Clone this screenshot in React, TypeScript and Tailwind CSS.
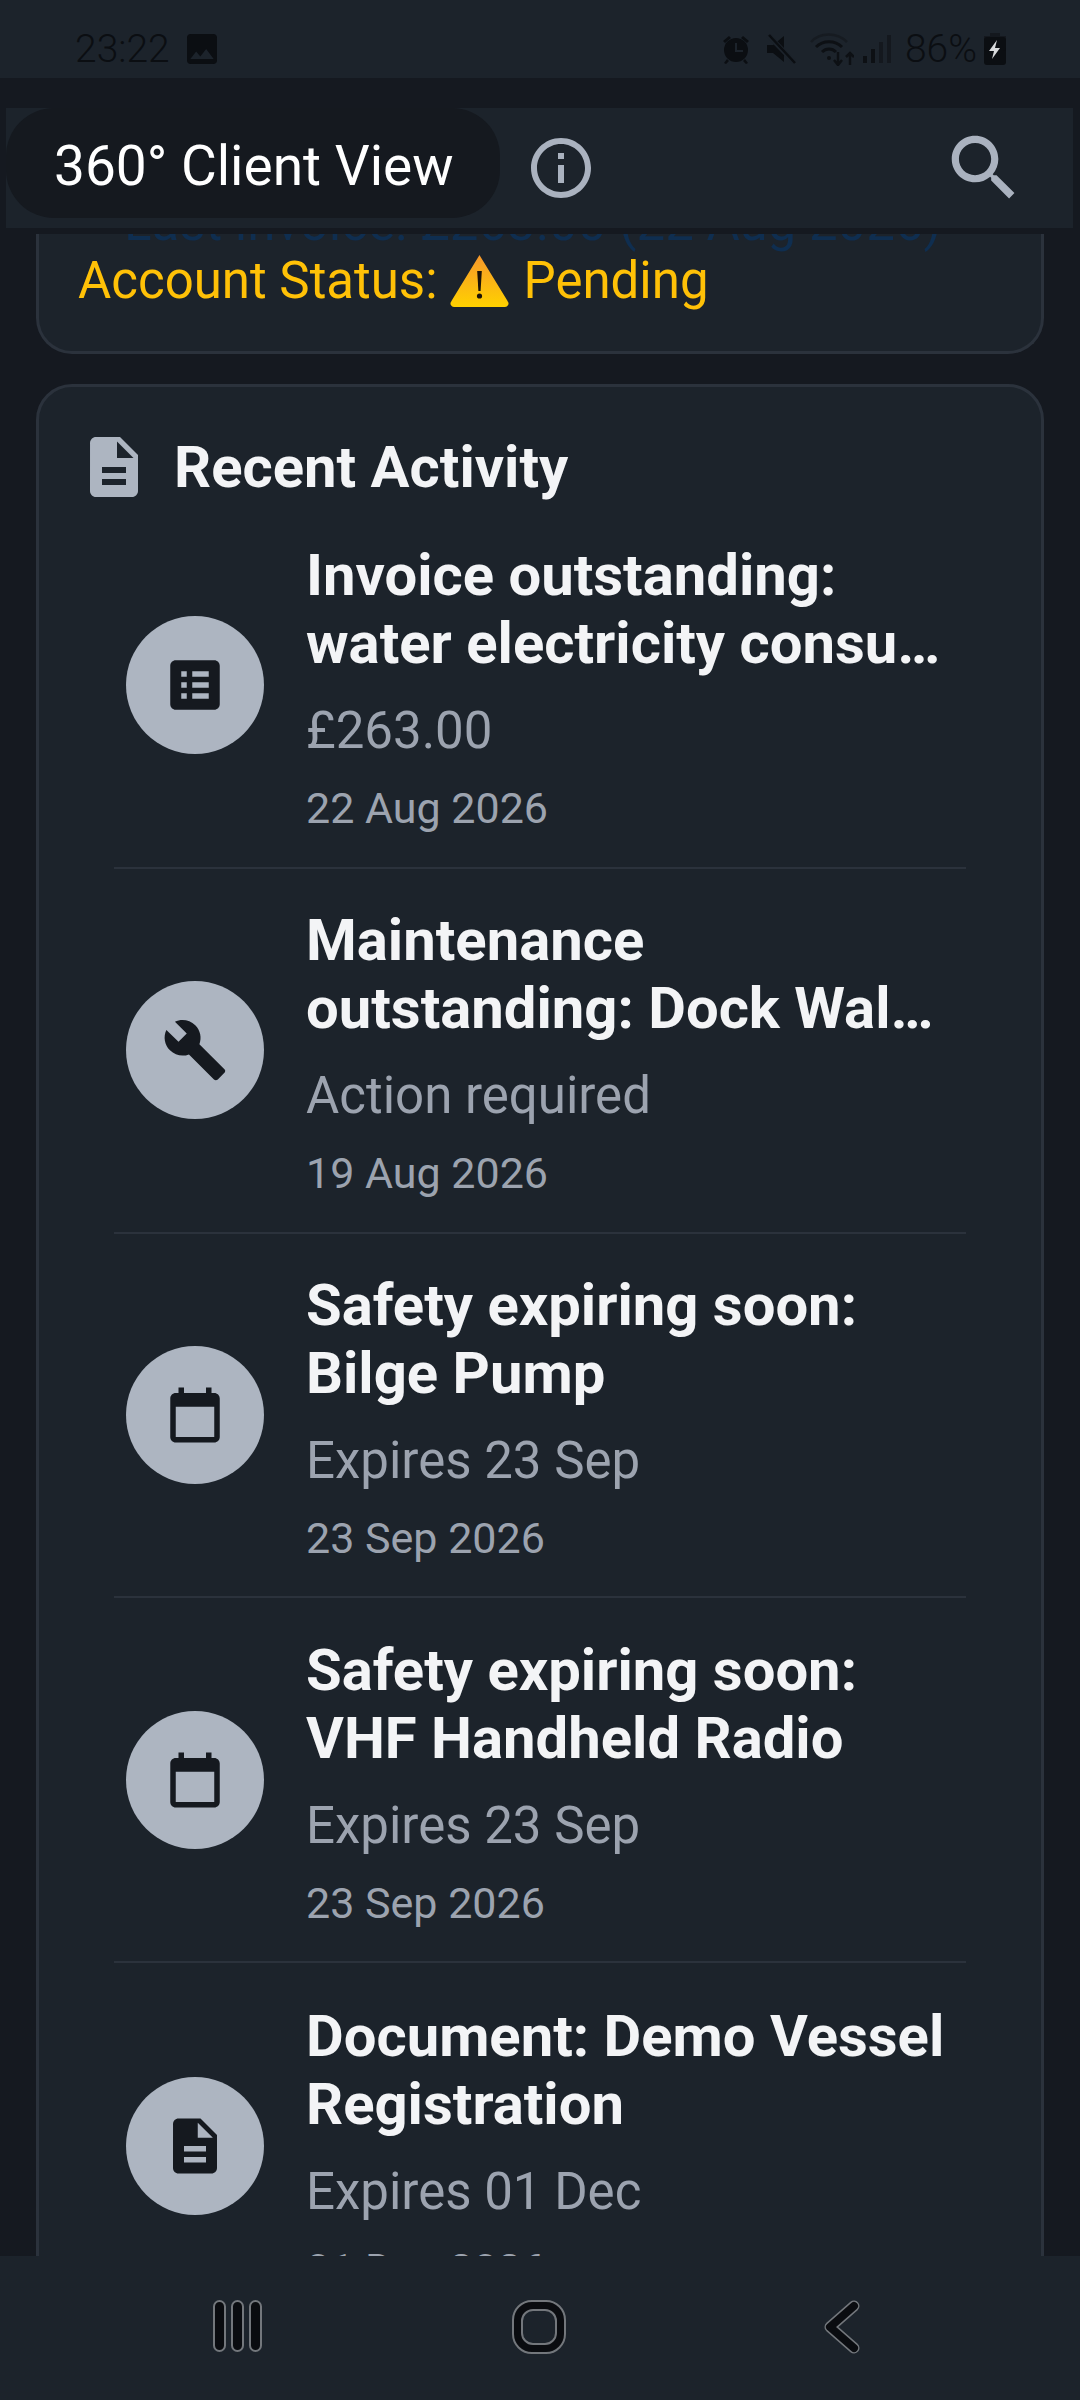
import React from "react";

const P = {
  doc: "M14 2H6c-1.1 0-1.99.9-1.99 2L4 20c0 1.1.89 2 1.99 2H18c1.1 0 2-.9 2-2V8l-6-6zm2 16H8v-2h8v2zm0-4H8v-2h8v2zm-3-5V3.5L18.5 9H13z",
  list: "M19 3H5c-1.1 0-2 .9-2 2v14c0 1.1.9 2 2 2h14c1.1 0 2-.9 2-2V5c0-1.1-.9-2-2-2zM9 17H7v-2h2v2zm0-4H7v-2h2v2zm0-4H7V7h2v2zm8 8h-6v-2h6v2zm0-4h-6v-2h6v2zm0-4h-6V7h6v2z",
  build: "M22.7 19l-9.1-9.1c.9-2.3.4-5-1.5-6.9-2-2-5-2.4-7.4-1.3L9 6 6 9 1.6 4.7C.4 7.1.9 10.1 2.9 12.1c1.9 1.9 4.6 2.4 6.9 1.5l9.1 9.1c.4.4 1 .4 1.4 0l2.3-2.3c.5-.4.5-1.1.1-1.4z",
  cal: "M19 4h-1V2h-2v2H8V2H6v2H5c-1.11 0-1.99.9-1.99 2L3 20c0 1.1.89 2 2 2h14c1.1 0 2-.9 2-2V6c0-1.1-.9-2-2-2zm0 16H5V9h14v11z",
  info: "M11 7h2v2h-2zm0 4h2v6h-2zm1-9C6.48 2 2 6.48 2 12s4.48 10 10 10 10-4.48 10-10S17.52 2 12 2zm0 18c-4.41 0-8-3.59-8-8s3.59-8 8-8 8 3.59 8 8-3.59 8-8 8z",
  search: "M15.5 14h-.79l-.28-.27C15.41 12.59 16 11.11 16 9.5 16 5.91 13.09 3 9.5 3S3 5.91 3 9.5 5.91 16 9.5 16c1.61 0 3.09-.59 4.23-1.57l.27.28v.79l5 4.99L20.49 19l-4.99-5zm-6 0C7.01 14 5 11.99 5 9.5S7.01 5 9.5 5 14 7.01 14 9.5 11.99 14 9.5 14z",
  image: "M21 19V5c0-1.1-.9-2-2-2H5c-1.1 0-2 .9-2 2v14c0 1.1.9 2 2 2h14c1.1 0 2-.9 2-2zM8.5 13.5l2.5 3.01L14.5 12l4.5 6H5l3.5-4.5z",
};

function Ico({ d, size, className }: { d: string; size: number; className?: string }) {
  return (
    <svg width={size} height={size} viewBox="0 0 24 24" className={className} fill="currentColor">
      <path d={d} />
    </svg>
  );
}

const rows = [
  { i: P.list, a: "Invoice outstanding:", b: "water electricity consumption", s: "£263.00", d: "22 Aug 2026" },
  { i: P.build, a: "Maintenance", b: "outstanding: Dock Walkway Repair", s: "Action required", d: "19 Aug 2026" },
  { i: P.cal, a: "Safety expiring soon:", b: "Bilge Pump", s: "Expires 23 Sep", d: "23 Sep 2026" },
  { i: P.cal, a: "Safety expiring soon:", b: "VHF Handheld Radio", s: "Expires 23 Sep", d: "23 Sep 2026" },
  { i: P.doc, a: "Document: Demo Vessel", b: "Registration", s: "Expires 01 Dec", d: "01 Dec 2026" },
];

function Row({ r, last }: { r: (typeof rows)[number]; last: boolean }) {
  return (
    <div className={`flex items-center pl-[12px] h-[364.8px] ${last ? "" : "border-b-[2px] border-[#2b323c]"}`}>
      <div className="w-[138px] h-[138px] rounded-full bg-[#adb5c1] flex items-center justify-center shrink-0 text-[#15191f]">
        <Ico d={r.i} size={66} />
      </div>
      <div className="ml-[42px] w-[644px] min-w-0 pt-[3px]">
        <div className="text-[58px] leading-[68px] font-bold text-[#f3f4f6]">
          <div className="whitespace-nowrap overflow-hidden text-ellipsis">{r.a}</div>
          <div className="whitespace-nowrap overflow-hidden text-ellipsis">{r.b}</div>
        </div>
        <div className="mt-[26px] text-[51px] leading-[56px] text-[#9ca3af]">{r.s}</div>
        <div className="mt-[25px] text-[43px] leading-[48px] text-[#9ca3af]">{r.d}</div>
      </div>
    </div>
  );
}

function StatusBar() {
  const c = "text-[#0b0e12]";
  return (
    <div className={`h-[78px] bg-[#1c232b] flex items-center pt-[20px] ${c} shrink-0`}>
      <span className="ml-[75px] text-[39px] leading-[58px] font-light">23:22</span>
      <Ico d={P.image} size={40} className="ml-[12px]" />
      <div className="ml-auto mr-[74px] flex items-center">
        <svg width="30" height="30" viewBox="0 0 30 30" fill="currentColor">
          <circle cx="15" cy="16" r="12" />
          <path d="M2 7l6-5 2 2-6 5zM28 7l-6-5-2 2 6 5zM6 25l-3 4 2 1 3-3zM24 25l3 4-2 1-3-3z" />
          <path d="M14 9h2v7h6v2h-8z" fill="#1c232b" />
        </svg>
        <svg width="30" height="30" viewBox="0 0 30 30" fill="currentColor" className="ml-[15px]">
          <path d="M1 11h6l11-9v26l-11-9H1z" />
          <path d="M2 1l27 28" stroke="#1c232b" strokeWidth="5" />
          <path d="M3 1l26 28" stroke="currentColor" strokeWidth="2.5" />
        </svg>
        <svg width="44" height="34" viewBox="0 0 44 34" fill="none" stroke="#12161b" className="ml-[14px]" strokeWidth="2.5">
          <path d="M1 10C10 0 27 0 37 10" opacity="0.6" />
          <path d="M6 15c7-7 19-7 26 0" strokeWidth="3" stroke="#0d1014" />
          <path d="M12 20c4-4 10-4 14 0" strokeWidth="3" stroke="#0d1014" />
          <circle cx="19" cy="26" r="2" fill="#0d1014" stroke="none" />
          <path d="M28 20v13M24 28l4 5 4-5M40 33V21M36 25l4-4 4 4" stroke="#0d1014" strokeWidth="2.5" />
        </svg>
        <svg width="28" height="30" viewBox="0 0 28 30" className="ml-[9px]">
          <rect x="0" y="22" width="4" height="7" fill="#0d1014" />
          <rect x="8" y="15" width="4" height="14" fill="#0d1014" />
          <rect x="16" y="8" width="4" height="21" fill="#14181e" />
          <rect x="24" y="1" width="4" height="28" fill="#14181e" />
        </svg>
        <span className="ml-[14px] text-[39px] leading-[58px] font-light">86%</span>
        <svg width="22" height="32" viewBox="0 0 22 32" className="ml-[7px]">
          <rect x="6" y="0" width="10" height="4" fill="#14181e" />
          <rect x="0" y="3" width="22" height="8" fill="#14181e" />
          <rect x="0" y="10" width="22" height="22" rx="3" fill="#0b0e12" />
          <rect x="0" y="4" width="22" height="14" rx="3" fill="#0b0e12" />
          <path d="M13 7l-8 11h5l-2 8 8-11h-5z" fill="#d8dadc" />
        </svg>
      </div>
    </div>
  );
}

function Warn() {
  return (
    <svg width="59" height="52" viewBox="0 0 59 52" className="inline-block ml-[12px] mr-[15px] align-[-9px]">
      <defs>
        <linearGradient id="wg" x1="0" y1="0" x2="0" y2="1">
          <stop offset="0" stopColor="#f79a2a" />
          <stop offset="1" stopColor="#ffd000" />
        </linearGradient>
      </defs>
      <path d="M29.5 2L57 47a2.5 2.5 0 0 1-2 4H4a2.5 2.5 0 0 1-2-4z" fill="url(#wg)" stroke="url(#wg)" strokeWidth="2" />
      <path d="M27.2 16h4.6l-1.2 20h-2.2z" fill="#1a1208" />
      <circle cx="29.5" cy="41" r="2.6" fill="#1a1208" />
    </svg>
  );
}

function NavBar() {
  const pill = "w-[13px] h-[52px] rounded-full bg-[#0a0c10] border-[2px] border-[#73777c]";
  return (
    <div className="h-[144px] bg-[#1c232b] shrink-0 flex items-start pt-[44px]">
      <div className="ml-[213px] flex gap-[5px]">
        <div className={pill} />
        <div className={pill} />
        <div className={pill} />
      </div>
      <div className="ml-[250px] w-[54px] h-[54px] rounded-[20px] border-[2px] border-[#73777c] bg-[#0a0c10] flex items-center justify-center">
        <div className="w-[36px] h-[36px] rounded-[12px] border-[2px] border-[#73777c] bg-[#1c232b]" />
      </div>
      <svg width="36" height="54" viewBox="0 0 36 54" fill="none" strokeLinecap="round" strokeLinejoin="round" className="ml-[258px]">
        <path d="M30 6L6 27l24 21" stroke="#73777c" strokeWidth="11" />
        <path d="M30 6L6 27l24 21" stroke="#0a0c10" strokeWidth="8" />
      </svg>
    </div>
  );
}

export default function App() {
  return (
    <div className="w-[1080px] h-[2400px] bg-[#151920] flex flex-col overflow-hidden font-['Roboto',sans-serif]">
      <StatusBar />
      <div className="mt-[30px] ml-[6px] mr-[7px] h-[120px] bg-[#1c232b] flex items-start shrink-0">
        <div className="h-[110px] w-[494px] rounded-[48px] bg-[#15191f] flex items-center pl-[48px] pt-[6px]">
          <span className="text-[55px] text-white whitespace-nowrap">360° Client View</span>
        </div>
        <Ico d={P.info} size={72} className="text-[#aab2bf] ml-[25px] mt-[24px]" />
        <Ico d={P.search} size={86} className="text-[#aab2bf] ml-auto mr-[46px] mt-[17px]" />
      </div>
      <div className="mt-[6px] flex-1 min-h-0 overflow-hidden px-[36px]">
        <div className="bg-[#1c232b] border-x-[3px] border-b-[3px] border-[#2b323c] rounded-b-[36px] h-[120px] overflow-hidden">
          <div className="-mt-[39px] ml-[85px] text-[51px] leading-[56px] text-[#0f2e50] whitespace-nowrap">
            Last invoice: £263.00 (22 Aug 2026)
          </div>
          <div className="ml-[39px] mt-[2px] text-[51px] leading-[56px] text-[#ffc107] whitespace-nowrap">
            Account Status:<Warn />Pending
          </div>
        </div>
        <div className="mt-[30px] bg-[#1c232b] border-[3px] border-[#2b323c] rounded-[36px] pt-[42px] px-[75px]">
          <div className="-ml-[36px] flex items-center h-[75px]">
            <Ico d={P.doc} size={72} className="text-[#adb5c1]" />
            <span className="ml-[24px] text-[58px] leading-[64px] font-bold text-[#f3f4f6]">Recent Activity</span>
          </div>
          {rows.map((r, i) => (
            <Row key={i} r={r} last={i === rows.length - 1} />
          ))}
        </div>
      </div>
      <NavBar />
    </div>
  );
}
